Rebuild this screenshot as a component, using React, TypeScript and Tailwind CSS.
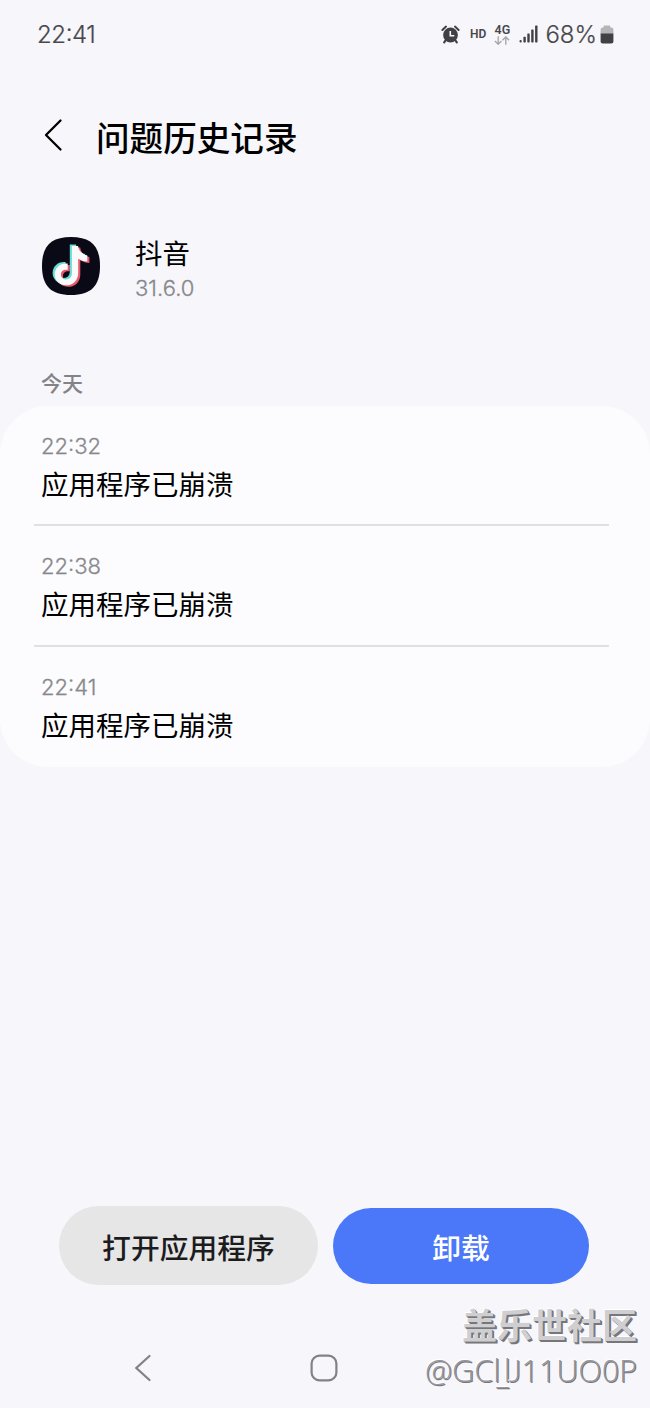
import React from "react";

const crashes = [
  { time: "22:32", message: "应用程序已崩溃" },
  { time: "22:38", message: "应用程序已崩溃" },
  { time: "22:41", message: "应用程序已崩溃" },
];

function Clock({ value }: { value: string }) {
  const [hours, minutes] = value.split(":");
  return (
    <>
      {hours}
      <span className="relative -top-[1.5px]">:</span>
      {minutes}
    </>
  );
}

function AlarmIcon() {
  return (
    <svg width="19" height="19" viewBox="0 0 19 19" fill="none">
      <circle cx="9.5" cy="10" r="7.4" fill="#414144" />
      <path d="M1.4 5 5 1.6M17.6 5 14 1.6" stroke="#414144" strokeWidth="2" strokeLinecap="round" />
      <path d="M4.5 15.5 3.2 17.4M14.5 15.5 15.8 17.4" stroke="#414144" strokeWidth="2.2" strokeLinecap="round" />
      <path d="M9.3 6v4.7h4" stroke="#f6f6fb" strokeWidth="1.6" />
    </svg>
  );
}

function DataArrows() {
  return (
    <svg width="16" height="9" viewBox="0 0 16 9" fill="none" stroke="#a9a9ac" strokeWidth="1.4">
      <path d="M4.2.3v7.8M.9 4.9l3.3 3.3 3.3-3.3M11.8 8.7V1M8.5 4.2 11.8.9l3.3 3.3" />
    </svg>
  );
}

function SignalIcon() {
  return (
    <svg width="20" height="18" viewBox="0 0 20 18" fill="#414144">
      <rect x="0.5" y="15" width="2.2" height="2.4" rx="1" />
      <rect x="4.4" y="11.8" width="2.4" height="5.6" rx=".6" />
      <rect x="8.3" y="8.4" width="2.4" height="9" rx=".6" />
      <rect x="12.2" y="4.4" width="2.4" height="13" rx=".6" />
      <rect x="16.1" y="0.6" width="2.4" height="16.8" rx=".6" />
    </svg>
  );
}

function BatteryIcon() {
  return (
    <svg width="14" height="19" viewBox="0 0 14 19">
      <path d="M4.5.4h5a.8.8 0 0 1 .8.8v1.3h1A2 2 0 0 1 13.4 4.5V9H.6V4.5a2 2 0 0 1 2-2h1V1.2a.8.8 0 0 1 .9-.8Z" fill="#b5b5b8" />
      <path d="M.6 8.5h12.8v8a2 2 0 0 1-2 2H2.6a2 2 0 0 1-2-2Z" fill="#414144" />
    </svg>
  );
}

function AppLogo() {
  const note =
    "M27.2 6.5h6.2c.4 4.7 4 8.5 9.2 9.4v6.2c-3.2-.1-6.8-1.2-9.1-2.8v13.9c0 8-5.4 12.6-12 12.6C14.8 45.8 10 41 10 35c0-7 5.7-11.9 13-11v6.3c-3.9-.8-6.8 1.3-6.8 4.6 0 2.9 2.2 5 5.1 5 3.6 0 5.9-2.3 5.9-6.4Z";
  return (
    <svg width="58" height="58" viewBox="0 0 58 58">
      <path d="M29 0C49 0 58 9 58 29S49 58 29 58 0 49 0 29 9 0 29 0Z" fill="#0a0a16" />
      <path d={note} transform="translate(4.8 4)" fill="#e8596f" />
      <path d={note} transform="translate(0.6 1)" fill="#68dcd8" />
      <path d={note} transform="translate(2.7 2.5)" fill="#fafafa" />
    </svg>
  );
}

export default function App() {
  return (
    <main className="relative flex h-[1408px] w-[650px] flex-col overflow-hidden bg-[#f6f6fb] font-['Inter','Noto_Sans_CJK_SC',sans-serif] text-black">
      <header className="flex h-[68px] items-center justify-between pl-[37px] pr-[36px] text-[#48484b]">
        <span className="pt-px text-[24px] leading-[30px] font-light tracking-[-0.4px] [-webkit-text-stroke:0.2px_currentColor]"><Clock value="22:41" /></span>
        <div className="flex items-center">
          <AlarmIcon />
          <span className="ml-[10px] font-['Roboto',sans-serif] text-[12px] leading-4 font-semibold">HD</span>
          <div className="ml-[8px] flex w-4 flex-col items-center">
            <span className="font-['Roboto',sans-serif] text-[12.5px] leading-[12px] font-semibold">4G</span>
            <DataArrows />
          </div>
          <span className="ml-[9px]"><SignalIcon /></span>
          <span className="ml-[6px] pt-px text-[24px] leading-[30px] font-light [-webkit-text-stroke:0.2px_currentColor]">68%</span>
          <span className="ml-[3px]"><BatteryIcon /></span>
        </div>
      </header>

      <div className="mt-[37px] flex h-[60px] items-center pl-[44px]">
        <svg width="19" height="34" viewBox="0 0 19 34" fill="none" className="shrink-0">
          <path d="M16.5 2.5 2 17l14.5 14.5" stroke="#000" strokeWidth="2.3" strokeLinecap="round" strokeLinejoin="round" />
        </svg>
        <h1 className="ml-[33px] pt-[7px] text-[33.6px] leading-[48px] font-medium">问题历史记录</h1>
      </div>

      <section className="mt-[70px] flex h-[66px] pl-[42px]">
        <div className="pt-[2px]"><AppLogo /></div>
        <div className="ml-[35px] pt-px">
          <h2 className="text-[27.4px] leading-9">抖音</h2>
          <p className="text-[22px] leading-[32px] font-light text-[#87878b] [-webkit-text-stroke:0.3px_currentColor]">31.6.0</p>
        </div>
      </section>

      <h3 className="mt-[67px] h-[38px] pl-[41px] text-[21px] leading-[31px] font-medium text-[#838387]">今天</h3>

      <ul className="h-[361px] rounded-[48px] bg-[#fcfcff]">
        {crashes.map(({ time, message }, i) => (
          <li key={time} className="h-[120.3px] pr-[41px] pl-[34px]">
            <div className={`h-full pl-[7px] pt-[26px] ${i < 2 ? "border-b-2 border-[#dfdfe4]" : ""}`}>
              <time className="block text-[22px] leading-[28px] font-light text-[#88888c] [-webkit-text-stroke:0.3px_currentColor]"><Clock value={time} /></time>
              <p className="mt-[5px] text-[27.5px] leading-[40px]">{message}</p>
            </div>
          </li>
        ))}
      </ul>

      <div className="mt-[439px] flex h-[79px] items-center gap-[15px] pl-[59px]">
        <button className="h-[79px] w-[259px] rounded-full bg-[#e6e6e6] pt-[6px] text-[28.8px] leading-10 font-medium text-[#1c1c1e]">打开应用程序</button>
        <button className="h-[76px] w-[256px] rounded-full bg-[#4a78f8] pt-[6px] text-[28.8px] leading-10 font-medium text-white">卸载</button>
      </div>

      <nav className="mt-[68px] flex items-center pl-[134px]">
        <svg width="18" height="30" viewBox="0 0 18 30" fill="none">
          <path d="M15.5 3 2.3 15 15.5 27" stroke="#828285" strokeWidth="2.2" strokeLinecap="round" />
        </svg>
        <svg width="28" height="28" viewBox="0 0 28 28" fill="none" className="ml-[158px]">
          <rect x="1.6" y="1.6" width="24.8" height="24.8" rx="8" stroke="#828285" strokeWidth="2.2" />
        </svg>
      </nav>

      <aside className="absolute right-[13px] top-[1303px] flex flex-col items-end whitespace-nowrap">
        <span className="text-[35px] leading-[46px] font-bold text-[#cfcfd2] [text-shadow:1px_1px_0_#77777b,2px_2px_0_#77777b,-1px_-1px_0_#fff]">盖乐世社区</span>
        <span className="font-['Open_Sans',sans-serif] text-[30.6px] leading-[43px] font-light text-[#98989c] [text-shadow:1px_1px_0_#77777b,-1px_-1px_0_#fff]">
          @GC<span className="tracking-[-4px]">l</span>
          <span className="relative top-[2px] tracking-[-5px]">_</span>
          <span className="tracking-[-2px]">l</span>
          <span className="font-['Lato',sans-serif]">J</span>11UO0P
        </span>
      </aside>
    </main>
  );
}
